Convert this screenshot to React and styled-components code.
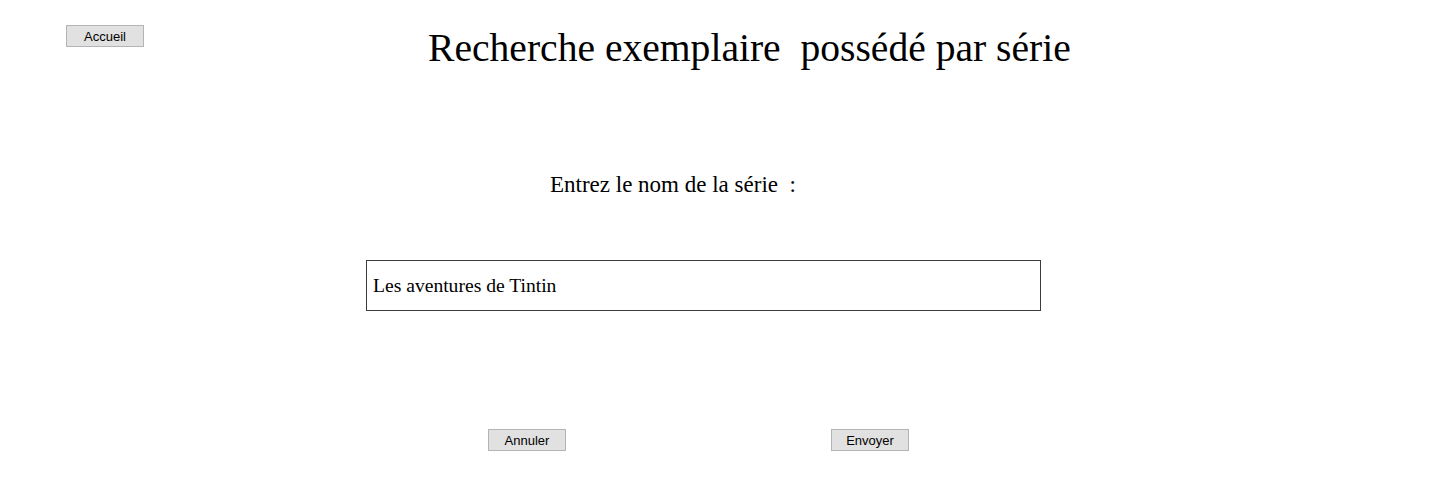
import React from "react";
import styled, { createGlobalStyle } from "styled-components";

const Global = createGlobalStyle`
  html, body { margin: 0; padding: 0; background: #ffffff; }
  body { font-family: "Liberation Serif", "Times New Roman", serif; color: #000; }
`;

const Page = styled.div`
  width: 1433px;
  height: 494px;
  display: flex;
  flex-direction: column;
`;

const Header = styled.header`
  display: flex;
  align-items: flex-start;
  padding: 25px 0 0 66px;
  height: 100px;
  box-sizing: border-box;
`;

const Button = styled.button`
  width: 78px;
  height: 22px;
  padding: 0;
  margin: 0;
  background: #e1e1e1;
  border: 1px solid #b4b4b4;
  font-family: "Liberation Sans", Arial, sans-serif;
  font-size: 13px;
  color: #000;
  cursor: pointer;
`;

const Title = styled.h1`
  margin: 0 0 0 284px;
  font-weight: normal;
  font-size: 39.6px;
  line-height: 46px;
  white-space: pre;
`;

const LabelRow = styled.div`
  display: flex;
  padding: 71px 0 0 550px;
  height: 28px;
`;

const Label = styled.label`
  font-size: 23px;
  line-height: 28px;
  white-space: pre;
`;

const FieldRow = styled.div`
  display: flex;
  padding: 61px 0 0 366px;
`;

const Field = styled.div`
  width: 675px;
  height: 51px;
  box-sizing: border-box;
  border: 1px solid #3c3c3c;
  display: flex;
  align-items: center;
  padding: 0 0 0 6px;
  font-size: 19.6px;
`;

const Actions = styled.div`
  display: flex;
  padding: 118px 0 0 488px;
  gap: 265px;
`;

export default function App() {
  return (
    <>
      <Global />
      <Page>
        <Header>
          <Button>Accueil</Button>
          <Title>{"Recherche exemplaire  possédé par série"}</Title>
        </Header>
        <LabelRow>
          <Label>{"Entrez le nom de la série  :"}</Label>
        </LabelRow>
        <FieldRow>
          <Field>Les aventures de Tintin</Field>
        </FieldRow>
        <Actions>
          <Button>Annuler</Button>
          <Button>Envoyer</Button>
        </Actions>
      </Page>
    </>
  );
}
